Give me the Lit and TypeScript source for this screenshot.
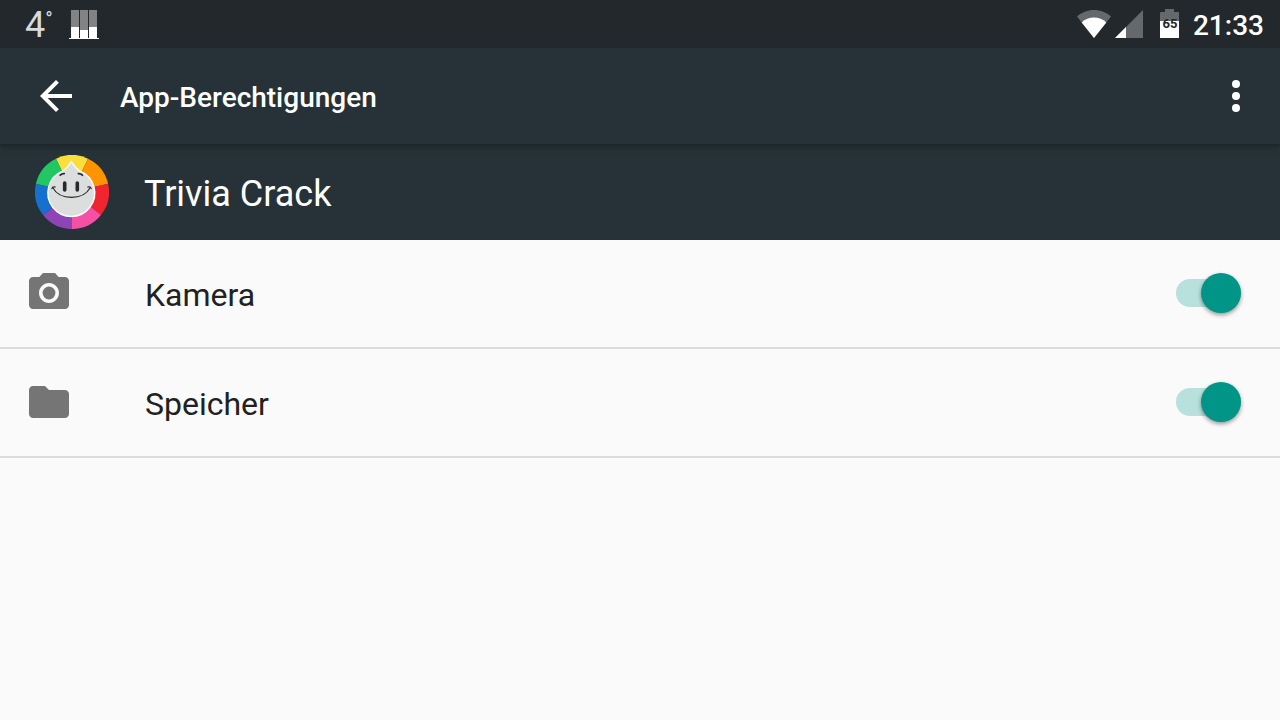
import { LitElement, html, css, svg } from "lit";
import { customElement, property, state } from "lit/decorators.js";

type IconName = "camera" | "folder";

interface Permission {
  id: string;
  label: string;
  icon: IconName;
  granted: boolean;
}

const icons: Record<IconName, ReturnType<typeof svg>> = {
  camera: svg`
    <circle cx="12" cy="12" r="3.2"/>
    <path d="M9 2L7.17 4H4c-1.1 0-2 .9-2 2v12c0 1.1.9 2 2 2h16c1.1 0 2-.9 2-2V6c0-1.1-.9-2-2-2h-3.17L15 2H9zm3 15c-2.76 0-5-2.24-5-5s2.24-5 5-5 5 2.24 5 5-2.24 5-5 5z"/>`,
  folder: svg`
    <path d="M10 4H4c-1.1 0-1.99.9-1.99 2L2 18c0 1.1.9 2 2 2h16c1.1 0 2-.9 2-2V8c0-1.1-.9-2-2-2h-8l-2-2z"/>`,
};

@customElement("status-bar")
class StatusBar extends LitElement {
  static styles = css`
    :host {
      position: relative;
      z-index: 1;
      display: flex;
      align-items: center;
      justify-content: space-between;
      height: 48px;
      padding: 0 16px 0 25px;
      background: #22282c;
      color: #fff;
    }
    .group {
      display: flex;
      align-items: center;
    }
    .temp {
      display: flex;
      align-items: flex-start;
      padding-top: 2px;
      font-size: 36px;
      font-weight: 400;
      line-height: 48px;
      color: #d8dadb;
    }
    .degree {
      font-size: 20px;
      line-height: 36px;
    }
    .bars {
      margin-left: 16px;
    }
    .signal {
      margin-left: 4px;
    }
    .battery {
      position: relative;
      display: flex;
      margin-left: 17px;
    }
    .level {
      position: absolute;
      inset: 0;
      text-align: center;
      font-size: 13px;
      font-weight: 700;
      line-height: 30px;
      color: #22282c;
    }
    .clock {
      margin-left: 13px;
      font-size: 28px;
      font-weight: 500;
      line-height: 44px;
      padding-top: 4px;
    }
    svg {
      display: block;
    }
  `;

  render() {
    return html`
      <div class="group">
        <div class="temp">4<span class="degree">°</span></div>
        <svg class="bars" width="30" height="30" viewBox="0 0 30 30" aria-hidden="true">
          <path fill="#818384" d="M2 1h8v17H2zM11 1h8v20h-8zM20 1h8v17h-8z"/>
          <path fill="#fff" d="M2 18h8v11H2zM11 21h8v8h-8zM20 18h8v11h-8zM0 29h30v1H0z"/>
        </svg>
      </div>
      <div class="group">
        <svg width="34" height="30" viewBox="0 0 34 30" aria-hidden="true">
          <path fill="#66696b" d="M17 29L0 7.500C4.500 3.500 10.500 1 17 1s12.500 2.500 17 6.500z"/>
          <path fill="#fff" d="M17 29L4.700 13.400C8 10 12.500 8.400 17 8.400s9 1.600 12.300 5z"/>
        </svg>
        <svg class="signal" width="28" height="30" viewBox="0 0 28 30" aria-hidden="true">
          <path fill="#66696b" d="M0 29L28 1v28z"/>
          <path fill="#fff" d="M0 29l11-11v11z"/>
        </svg>
        <div class="battery">
          <svg width="20" height="30" viewBox="0 0 20 30" aria-hidden="true">
            <path fill="#66696b" d="M1 3h4V0h9v3h4q1 0 1 1v8H0V4q0-1 1-1z"/>
            <path fill="#fff" d="M0 12h19v17H0z"/>
          </svg>
          <span class="level">65</span>
        </div>
        <time class="clock">21:33</time>
      </div>
    `;
  }
}

@customElement("trivia-logo")
class TriviaLogo extends LitElement {
  static styles = css`
    :host,
    svg {
      display: block;
    }
  `;

  render() {
    return html`
      <svg width="74" height="74" viewBox="0 0 74 74" aria-hidden="true">
        <path fill="#fbdd3d" d="M37 37L20.950 3.660A37 37 0 0 1 53.050 3.660z"/>
        <path fill="#fe9400" d="M37 37L53.050 3.660A37 37 0 0 1 73.070 28.770z"/>
        <path fill="#f1252f" d="M37 37L73.070 28.770A37 37 0 0 1 65.930 60.070z"/>
        <path fill="#f650a5" d="M37 37L65.930 60.070A37 37 0 0 1 37 74z"/>
        <path fill="#8e44b5" d="M37 37V74A37 37 0 0 1 8.070 60.070z"/>
        <path fill="#1670d0" d="M37 37L8.070 60.070A37 37 0 0 1 .93 28.770z"/>
        <path fill="#20c763" d="M37 37L.93 28.770A37 37 0 0 1 20.950 3.660z"/>
        <path fill="#000" opacity=".2" d="M27 16L35 9L46 16A23.500 23.500 0 1 1 27 16z" transform="translate(-1 1.500)"/>
        <path fill="#dcdddd" stroke="#fafafa" stroke-width="1.500" stroke-linejoin="round"
          d="M27.500 16.300C31 14 34 10.500 36.300 6.500C38.600 10.500 41.600 14 45.100 16.300A23.400 23.400 0 1 1 27.500 16.300z"/>
        <g fill="none" stroke="#252a2d" stroke-linecap="round">
          <path stroke-width="3.600" d="M29.700 28v7M42.300 28v7"/>
          <path stroke-width="1.800" d="M25.200 20.200Q27 18.500 29.200 18.700M43.400 18.700Q45.600 18.500 47.400 20.200"/>
          <path stroke-width="1.100" d="M18 33C25 45.500 48 45.500 55 33M16.800 33.600Q17.500 31.300 20.300 32M52.700 32Q55.500 31.300 56.200 33.600"/>
        </g>
      </svg>
    `;
  }
}

@customElement("permission-row")
class PermissionRow extends LitElement {
  @property({ attribute: false }) permission!: Permission;

  static styles = css`
    :host {
      display: flex;
      align-items: center;
      padding: 33px 39px 34px 25px;
      border-bottom: 2px solid #dcdcdc;
    }
    .icon {
      flex: none;
      margin: -4px 0;
      fill: #757575;
    }
    .label {
      flex: 1;
      margin-left: 72px;
      padding-top: 4px;
      font-size: 32px;
      line-height: 36px;
      color: #212121;
    }
    .switch {
      appearance: none;
      position: relative;
      flex: none;
      width: 65px;
      height: 40px;
      margin: 0;
      cursor: pointer;
    }
    .switch::before {
      content: "";
      position: absolute;
      inset: 6px 0;
      border-radius: 14px;
      background: #b9b9b9;
    }
    .switch::after {
      content: "";
      position: absolute;
      top: 0;
      left: 0;
      width: 40px;
      height: 40px;
      border-radius: 50%;
      background: #f1f1f1;
      box-shadow: 0 2px 4px rgba(0, 0, 0, 0.4);
    }
    .switch:checked::before {
      background: #b8e0dc;
    }
    .switch:checked::after {
      left: auto;
      right: 0;
      background: #009587;
    }
  `;

  private onChange(event: Event) {
    this.dispatchEvent(
      new CustomEvent("permission-change", {
        detail: {
          id: this.permission.id,
          granted: (event.target as HTMLInputElement).checked,
        },
      })
    );
  }

  render() {
    const { id, label, icon, granted } = this.permission;
    return html`
      <svg class="icon" width="48" height="48" viewBox="0 0 24 24" aria-hidden="true">${icons[icon]}</svg>
      <label class="label" for=${id}>${label}</label>
      <input class="switch" type="checkbox" id=${id} .checked=${granted} @change=${this.onChange} />
    `;
  }
}

@customElement("app-root")
class AppRoot extends LitElement {
  @state() private permissions: Permission[] = [
    { id: "camera", label: "Kamera", icon: "camera", granted: true },
    { id: "storage", label: "Speicher", icon: "folder", granted: true },
  ];

  static styles = css`
    :host {
      display: block;
      min-height: 100vh;
      background: #fafafa;
      font-family: Roboto, "Noto Sans", sans-serif;
    }
    .toolbar {
      position: relative;
      display: flex;
      align-items: center;
      height: 96px;
      padding: 0 20px 0 32px;
      background: #263238;
      box-shadow: 0 2px 6px rgba(0, 0, 0, 0.35);
      color: #fff;
    }
    .title {
      flex: 1;
      margin: 0 0 0 40px;
      padding-top: 4px;
      font-size: 28px;
      font-weight: 500;
      line-height: 36px;
    }
    .action {
      display: block;
      padding: 0;
      border: 0;
      background: none;
      color: inherit;
      cursor: pointer;
    }
    .action svg {
      display: block;
      fill: currentColor;
    }
    .app {
      display: flex;
      align-items: center;
      height: 96px;
      padding: 0 35px;
      background: #263238;
      color: #fff;
    }
    .name {
      margin: 0 0 0 35px;
      padding-top: 4px;
      font-size: 36px;
      font-weight: 400;
      line-height: 44px;
    }
  `;

  private onPermissionChange(event: CustomEvent<{ id: string; granted: boolean }>) {
    const { id, granted } = event.detail;
    this.permissions = this.permissions.map((p) => (p.id === id ? { ...p, granted } : p));
  }

  render() {
    return html`
      <status-bar></status-bar>
      <header class="toolbar">
        <button class="action" aria-label="Zurück">
          <svg width="48" height="48" viewBox="0 0 24 24" aria-hidden="true">
            <path d="M20 11H7.830l5.590-5.590L12 4l-8 8 8 8 1.410-1.410L7.830 13H20v-2z"/>
          </svg>
        </button>
        <h1 class="title">App-Berechtigungen</h1>
        <button class="action" aria-label="Weitere Optionen">
          <svg width="48" height="48" viewBox="0 0 24 24" aria-hidden="true">
            <circle cx="12" cy="6" r="2"/>
            <circle cx="12" cy="12" r="2"/>
            <circle cx="12" cy="18" r="2"/>
          </svg>
        </button>
      </header>
      <section class="app">
        <trivia-logo></trivia-logo>
        <h2 class="name">Trivia Crack</h2>
      </section>
      <main>
        ${this.permissions.map(
          (p) => html`<permission-row .permission=${p} @permission-change=${this.onPermissionChange}></permission-row>`
        )}
      </main>
    `;
  }
}
